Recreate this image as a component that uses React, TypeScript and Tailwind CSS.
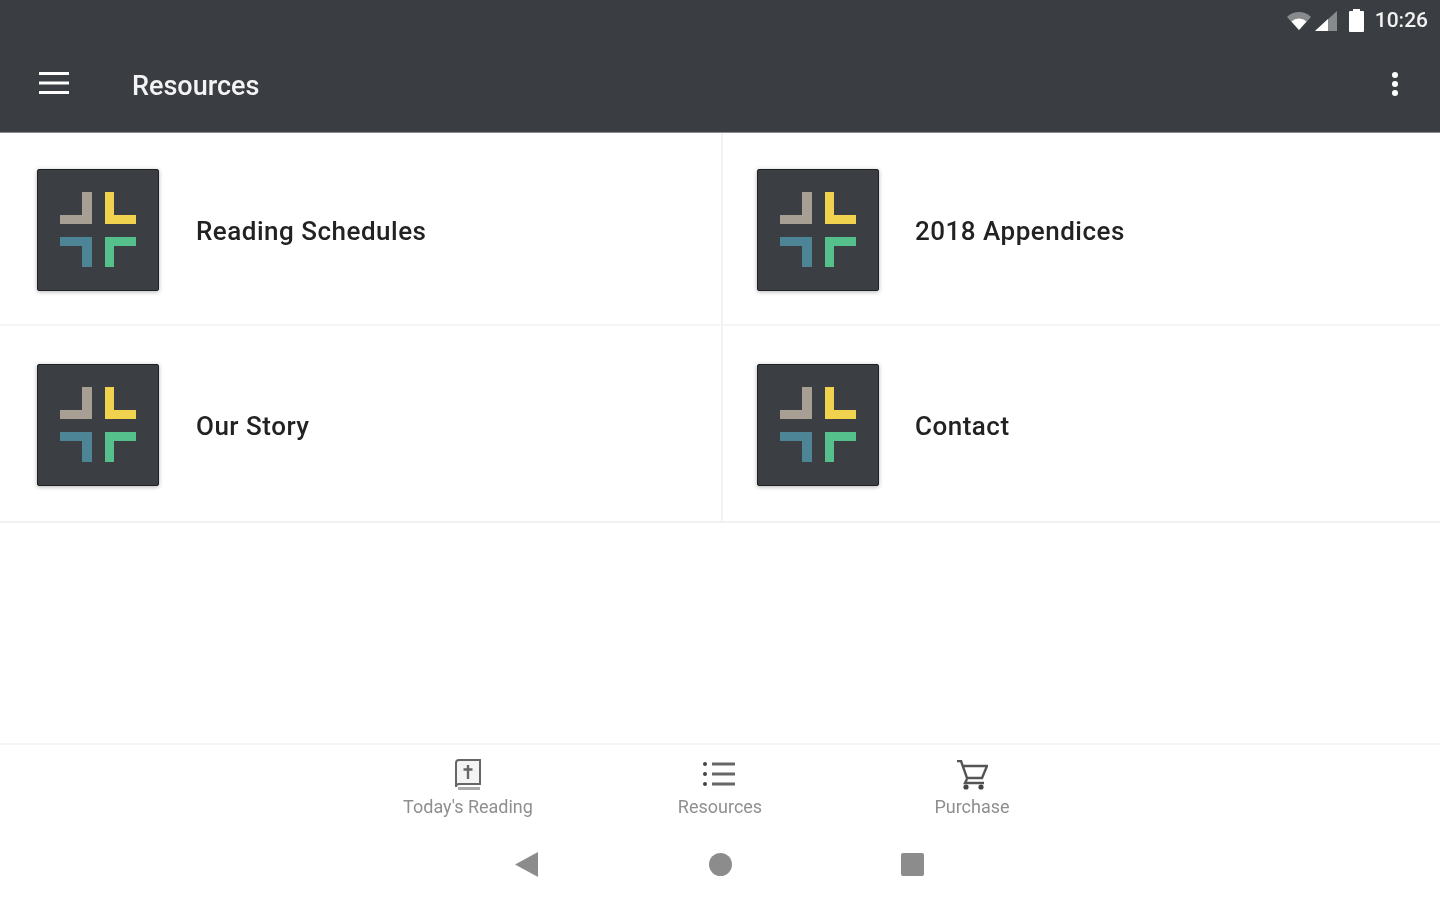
const font = { fontFamily: "Roboto, sans-serif" };

function Logo() {
  return (
    <div className="w-[122px] h-[122px] shrink-0 bg-[#3b3e42] border border-[#1f2123] rounded-[2px] shadow-[0_1px_4px_rgba(0,0,0,0.3)]">
      <svg viewBox="0 0 122 122" className="w-[122px] h-[122px] -m-px block">
        <path d="M23 46h22V23h10v32H23z" fill="#a89f94" />
        <path d="M68 23h9v23h22v9H68z" fill="#f0d24f" />
        <path d="M23 68h32v30H45V77H23z" fill="#4d8496" />
        <path d="M68 68h31v9H77v21h-9z" fill="#55c08c" />
      </svg>
    </div>
  );
}

function Item({ title, right }: { title: string; right?: boolean }) {
  return (
    <div className={`flex items-center h-full pt-[2px] ${right ? "pl-[34px] gap-[36px]" : "pl-[37px] gap-[37px] border-r-2 border-[#f3f3f3]"}`}>
      <Logo />
      <span className="mt-[4px] text-[26px] font-medium text-[#222] tracking-[0.5px]">{title}</span>
    </div>
  );
}

function NavItem({ label, children }: { label: string; children: React.ReactNode }) {
  return (
    <div className="w-[252px] flex flex-col items-center">
      <div className="h-[34px] flex items-center justify-center">{children}</div>
      <span className="mt-[4px] text-[18px] leading-[22px] text-[#8f8f8f]">{label}</span>
    </div>
  );
}

export default function App() {
  return (
    <div style={font} className="w-[1440px] h-[900px] bg-white flex flex-col overflow-hidden blur-[0.5px]">
      <header className="h-[133px] shrink-0 bg-[#3a3d41] border-b border-[#8a8c8e] flex flex-col">
        <div className="h-[40px] flex items-center justify-end pr-[12px] pt-[1px]">
          <svg viewBox="0 0 24 18" className="w-[24px] h-[18px] text-white">
            <path d="M0 5a17 17 0 0 1 24 0L12 18z" fill="currentColor" opacity="0.4" />
            <path d="M4.5 9.5a11 11 0 0 1 15 0L12 18z" fill="currentColor" />
          </svg>
          <svg viewBox="0 0 22 20" className="w-[22px] h-[20px] ml-[4px] text-white">
            <path d="M0 20 22 0v20z" fill="currentColor" opacity="0.4" />
            <path d="M0 20 13 8v12z" fill="currentColor" />
          </svg>
          <div className="ml-[12px] w-[15px] h-[23px] flex flex-col items-center">
            <div className="w-[7px] h-[2px] bg-white" />
            <div className="w-[15px] h-[21px] bg-white rounded-[1px]" />
          </div>
          <span className="ml-[11px] text-[21px] font-medium text-[#f2f2f2]">10:26</span>
        </div>
        <div className="flex-1 flex items-center relative">
          <svg viewBox="0 0 30 22" className="ml-[39px] mb-[6px] w-[30px] h-[22px]">
            <path d="M0 1.5h30M0 11h30M0 20.5h30" stroke="#fff" strokeWidth="3" />
          </svg>
          <h1 className="ml-[63px] text-[27px] font-medium text-[#f4f4f4]">Resources</h1>
          <svg viewBox="0 0 8 26" className="ml-auto mr-[41px] mb-[4px] w-[8px] h-[26px]">
            <circle cx="4" cy="4" r="3" fill="#fff" />
            <circle cx="4" cy="13" r="3" fill="#fff" />
            <circle cx="4" cy="22" r="3" fill="#fff" />
          </svg>
        </div>
      </header>

      <div className="grid grid-cols-[723px_717px] grid-rows-[193px_195px] border-b-2 border-[#f1f1f1]">
        <div className="border-b-2 border-[#f5f5f5]"><Item title="Reading Schedules" /></div>
        <div className="border-b-2 border-[#f5f5f5]"><Item title="2018 Appendices" right /></div>
        <Item title="Our Story" />
        <Item title="Contact" right />
      </div>

      <div className="flex-1" />

      <nav className="h-[157px] shrink-0 border-t-2 border-[#f6f6f6] flex flex-col">
        <div className="flex justify-center pt-[13px]">
          <NavItem label="Today's Reading">
            <svg viewBox="0 0 26 32" className="w-[26px] h-[32px] -ml-px">
              <path d="M4 1h21v24H4a3 3 0 0 0-3 3V4a3 3 0 0 1 3-3z" fill="#f4f4f4" stroke="#666" strokeWidth="2" />
              <path d="M3 28h22v3H3z" fill="#aaa" />
              <path d="M13 6v14M8.5 10.5h9" stroke="#666" strokeWidth="2.4" />
            </svg>
          </NavItem>
          <NavItem label="Resources">
            <svg viewBox="0 0 32 26" className="w-[32px] h-[26px] -ml-[2px] -mt-[2px]">
              <circle cx="2" cy="3" r="2" fill="#444" />
              <circle cx="2" cy="13" r="2" fill="#444" />
              <circle cx="2" cy="23" r="2" fill="#444" />
              <path d="M9 3h23M9 13h23M9 23h23" stroke="#666" strokeWidth="3" />
            </svg>
          </NavItem>
          <NavItem label="Purchase">
            <svg viewBox="0 0 32 30" className="w-[32px] h-[30px]">
              <path d="M1 1h4l6 17h15l5-12H7" fill="none" stroke="#555" strokeWidth="2.4" />
              <path d="M11 19l-2 4h19" fill="none" stroke="#555" strokeWidth="2.4" />
              <circle cx="10" cy="27" r="2.6" fill="#444" />
              <circle cx="25" cy="27" r="2.6" fill="#444" />
            </svg>
          </NavItem>
        </div>
        <div className="flex justify-center items-center gap-[169px] mt-[34px]">
          <svg viewBox="0 0 23 25" className="w-[23px] h-[25px] -ml-[2px] mr-[2px]">
            <path d="M23 0v25L0 12.5z" fill="#8c8c8c" />
          </svg>
          <div className="w-[23px] h-[23px] rounded-full bg-[#8c8c8c]" />
          <div className="w-[23px] h-[23px] rounded-[2px] bg-[#8c8c8c]" />
        </div>
      </nav>
    </div>
  );
}
